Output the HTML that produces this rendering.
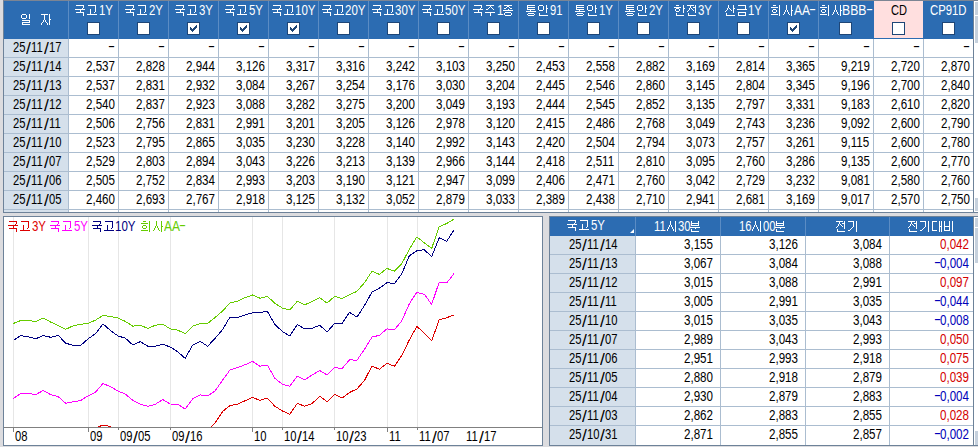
<!DOCTYPE html>
<html><head><meta charset="utf-8"><style>
html,body{margin:0;padding:0}
body{width:978px;height:447px;position:relative;overflow:hidden;background:#dcdcdf;font-family:"Liberation Sans",sans-serif}
body>div,body>span,body>svg{position:absolute;box-sizing:content-box}
.t{white-space:pre;line-height:19px;height:19px;display:block;font-size:14px;transform-origin:left}
.k{color:transparent!important}
</style></head><body>
<div style="left:3px;top:0px;width:975px;height:1px;background:#7c8594;"></div>
<div style="left:3px;top:1px;width:1px;height:212px;background:#6d8299;"></div>
<div style="left:3px;top:212px;width:975px;height:1px;background:#6d8299;"></div>
<div style="left:973px;top:1px;width:1px;height:212px;background:#6d8299;"></div>
<div style="left:4px;top:1px;width:969px;height:38px;background:#2c6cb2;"></div>
<div style="left:874px;top:1px;width:49px;height:37px;background:#ffdfdf;"></div>
<div style="left:68px;top:1px;width:1px;height:38px;background:#5b8cc4;"></div>
<div style="left:118px;top:1px;width:1px;height:38px;background:#5b8cc4;"></div>
<div style="left:168px;top:1px;width:1px;height:38px;background:#5b8cc4;"></div>
<div style="left:218px;top:1px;width:1px;height:38px;background:#5b8cc4;"></div>
<div style="left:268px;top:1px;width:1px;height:38px;background:#5b8cc4;"></div>
<div style="left:318px;top:1px;width:1px;height:38px;background:#5b8cc4;"></div>
<div style="left:368px;top:1px;width:1px;height:38px;background:#5b8cc4;"></div>
<div style="left:418px;top:1px;width:1px;height:38px;background:#5b8cc4;"></div>
<div style="left:468px;top:1px;width:1px;height:38px;background:#5b8cc4;"></div>
<div style="left:518px;top:1px;width:1px;height:38px;background:#5b8cc4;"></div>
<div style="left:568px;top:1px;width:1px;height:38px;background:#5b8cc4;"></div>
<div style="left:618px;top:1px;width:1px;height:38px;background:#5b8cc4;"></div>
<div style="left:668px;top:1px;width:1px;height:38px;background:#5b8cc4;"></div>
<div style="left:718px;top:1px;width:1px;height:38px;background:#5b8cc4;"></div>
<div style="left:768px;top:1px;width:1px;height:38px;background:#5b8cc4;"></div>
<div style="left:818px;top:1px;width:1px;height:38px;background:#5b8cc4;"></div>
<div style="left:4px;top:39px;width:969px;height:173px;background:#fff;"></div>
<div style="left:4px;top:39px;width:64px;height:173px;background:#d5e0eb;"></div>
<div style="left:4px;top:57px;width:969px;height:1px;background:#abbdd0;"></div>
<div style="left:4px;top:76px;width:969px;height:1px;background:#abbdd0;"></div>
<div style="left:4px;top:95px;width:969px;height:1px;background:#abbdd0;"></div>
<div style="left:4px;top:114px;width:969px;height:1px;background:#abbdd0;"></div>
<div style="left:4px;top:133px;width:969px;height:1px;background:#abbdd0;"></div>
<div style="left:4px;top:152px;width:969px;height:1px;background:#abbdd0;"></div>
<div style="left:4px;top:171px;width:969px;height:1px;background:#abbdd0;"></div>
<div style="left:4px;top:190px;width:969px;height:1px;background:#abbdd0;"></div>
<div style="left:4px;top:209px;width:969px;height:1px;background:#abbdd0;"></div>
<div style="left:68px;top:39px;width:1px;height:173px;background:#abbdd0;"></div>
<div style="left:118px;top:39px;width:1px;height:173px;background:#abbdd0;"></div>
<div style="left:168px;top:39px;width:1px;height:173px;background:#abbdd0;"></div>
<div style="left:218px;top:39px;width:1px;height:173px;background:#abbdd0;"></div>
<div style="left:268px;top:39px;width:1px;height:173px;background:#abbdd0;"></div>
<div style="left:318px;top:39px;width:1px;height:173px;background:#abbdd0;"></div>
<div style="left:368px;top:39px;width:1px;height:173px;background:#abbdd0;"></div>
<div style="left:418px;top:39px;width:1px;height:173px;background:#abbdd0;"></div>
<div style="left:468px;top:39px;width:1px;height:173px;background:#abbdd0;"></div>
<div style="left:518px;top:39px;width:1px;height:173px;background:#abbdd0;"></div>
<div style="left:568px;top:39px;width:1px;height:173px;background:#abbdd0;"></div>
<div style="left:618px;top:39px;width:1px;height:173px;background:#abbdd0;"></div>
<div style="left:668px;top:39px;width:1px;height:173px;background:#abbdd0;"></div>
<div style="left:718px;top:39px;width:1px;height:173px;background:#abbdd0;"></div>
<div style="left:768px;top:39px;width:1px;height:173px;background:#abbdd0;"></div>
<div style="left:818px;top:39px;width:1px;height:173px;background:#abbdd0;"></div>
<div style="left:873px;top:39px;width:1px;height:173px;background:#abbdd0;"></div>
<div style="left:923px;top:39px;width:1px;height:173px;background:#abbdd0;"></div>
<span class="t k" style="left:21px;top:10px">일 자</span>
<span class="t" style="left:98.75px;top:1px;color:#fff;transform:scaleX(0.8176)">1Y</span>
<span class="t k" style="left:75px;top:1px">국고1Y</span>
<div style="left:87px;top:22px;width:11px;height:11px;border:1px solid #1e4677;background:#fff"></div>
<span class="t" style="left:148.75px;top:1px;color:#fff;transform:scaleX(0.8176)">2Y</span>
<span class="t k" style="left:125px;top:1px">국고2Y</span>
<div style="left:137px;top:22px;width:11px;height:11px;border:1px solid #1e4677;background:#fff"></div>
<span class="t" style="left:198.75px;top:1px;color:#fff;transform:scaleX(0.8176)">3Y</span>
<span class="t k" style="left:175px;top:1px">국고3Y</span>
<div style="left:187px;top:22px;width:11px;height:11px;border:1px solid #1e4677;background:#fff"></div>
<svg style="left:187px;top:22px" width="13" height="13" shape-rendering="crispEdges"><path d="M9 3h1v1h-1zM8 4h2v1h-2zM3 5h1v1h-1zM7 5h3v1h-3zM3 6h2v1h-2zM6 6h3v1h-3zM3 7h5v1h-5zM4 8h3v1h-3zM5 9h1v1h-1z" fill="#1e4677"/></svg>
<span class="t" style="left:248.75px;top:1px;color:#fff;transform:scaleX(0.8176)">5Y</span>
<span class="t k" style="left:225px;top:1px">국고5Y</span>
<div style="left:237px;top:22px;width:11px;height:11px;border:1px solid #1e4677;background:#fff"></div>
<svg style="left:237px;top:22px" width="13" height="13" shape-rendering="crispEdges"><path d="M9 3h1v1h-1zM8 4h2v1h-2zM3 5h1v1h-1zM7 5h3v1h-3zM3 6h2v1h-2zM6 6h3v1h-3zM3 7h5v1h-5zM4 8h3v1h-3zM5 9h1v1h-1z" fill="#1e4677"/></svg>
<span class="t" style="left:295.25px;top:1px;color:#fff;transform:scaleX(0.8230)">10Y</span>
<span class="t k" style="left:272px;top:1px">국고10Y</span>
<div style="left:287px;top:22px;width:11px;height:11px;border:1px solid #1e4677;background:#fff"></div>
<svg style="left:287px;top:22px" width="13" height="13" shape-rendering="crispEdges"><path d="M9 3h1v1h-1zM8 4h2v1h-2zM3 5h1v1h-1zM7 5h3v1h-3zM3 6h2v1h-2zM6 6h3v1h-3zM3 7h5v1h-5zM4 8h3v1h-3zM5 9h1v1h-1z" fill="#1e4677"/></svg>
<span class="t" style="left:345.25px;top:1px;color:#fff;transform:scaleX(0.8230)">20Y</span>
<span class="t k" style="left:322px;top:1px">국고20Y</span>
<div style="left:337px;top:22px;width:11px;height:11px;border:1px solid #1e4677;background:#fff"></div>
<span class="t" style="left:395.25px;top:1px;color:#fff;transform:scaleX(0.8230)">30Y</span>
<span class="t k" style="left:372px;top:1px">국고30Y</span>
<div style="left:387px;top:22px;width:11px;height:11px;border:1px solid #1e4677;background:#fff"></div>
<span class="t" style="left:445.25px;top:1px;color:#fff;transform:scaleX(0.8230)">50Y</span>
<span class="t k" style="left:422px;top:1px">국고50Y</span>
<div style="left:437px;top:22px;width:11px;height:11px;border:1px solid #1e4677;background:#fff"></div>
<span class="t" style="left:496.75px;top:1px;color:#fff;transform:scaleX(0.8348)">1</span>
<span class="t k" style="left:473px;top:1px">국주1종</span>
<div style="left:487px;top:22px;width:11px;height:11px;border:1px solid #1e4677;background:#fff"></div>
<span class="t" style="left:549.75px;top:1px;color:#fff;transform:scaleX(0.8027)">91</span>
<span class="t k" style="left:526px;top:1px">통안91</span>
<div style="left:537px;top:22px;width:11px;height:11px;border:1px solid #1e4677;background:#fff"></div>
<span class="t" style="left:598.75px;top:1px;color:#fff;transform:scaleX(0.8176)">1Y</span>
<span class="t k" style="left:575px;top:1px">통안1Y</span>
<div style="left:587px;top:22px;width:11px;height:11px;border:1px solid #1e4677;background:#fff"></div>
<span class="t" style="left:648.75px;top:1px;color:#fff;transform:scaleX(0.8176)">2Y</span>
<span class="t k" style="left:625px;top:1px">통안2Y</span>
<div style="left:637px;top:22px;width:11px;height:11px;border:1px solid #1e4677;background:#fff"></div>
<span class="t" style="left:697.75px;top:1px;color:#fff;transform:scaleX(0.8176)">3Y</span>
<span class="t k" style="left:674px;top:1px">한전3Y</span>
<div style="left:687px;top:22px;width:11px;height:11px;border:1px solid #1e4677;background:#fff"></div>
<span class="t" style="left:747.75px;top:1px;color:#fff;transform:scaleX(0.8176)">1Y</span>
<span class="t k" style="left:724px;top:1px">산금1Y</span>
<div style="left:737px;top:22px;width:11px;height:11px;border:1px solid #1e4677;background:#fff"></div>
<span class="t" style="left:793.75px;top:1px;color:#fff;transform:scaleX(0.8567)">AA</span>
<span class="t" style="left:808.80px;top:0px;color:#fff;transform:scaleX(1.5)">-</span>
<span class="t k" style="left:770px;top:1px">회사AA-</span>
<div style="left:787px;top:22px;width:11px;height:11px;border:1px solid #1e4677;background:#fff"></div>
<svg style="left:787px;top:22px" width="13" height="13" shape-rendering="crispEdges"><path d="M9 3h1v1h-1zM8 4h2v1h-2zM3 5h1v1h-1zM7 5h3v1h-3zM3 6h2v1h-2zM6 6h3v1h-3zM3 7h5v1h-5zM4 8h3v1h-3zM5 9h1v1h-1z" fill="#1e4677"/></svg>
<span class="t" style="left:842.25px;top:1px;color:#fff;transform:scaleX(0.8746)">BBB</span>
<span class="t" style="left:865.80px;top:0px;color:#fff;transform:scaleX(1.5)">-</span>
<span class="t k" style="left:819px;top:1px">회사BBB-</span>
<div style="left:839px;top:22px;width:11px;height:11px;border:1px solid #1e4677;background:#fff"></div>
<span class="t" style="left:890.75px;top:1px;color:#000;transform:scaleX(0.7913)">CD</span>
<div style="left:892px;top:22px;width:11px;height:11px;border:1px solid #1e4677;background:#fff"></div>
<span class="t" style="left:930.25px;top:1px;color:#fff;transform:scaleX(0.8088)">CP91D</span>
<div style="left:942px;top:22px;width:11px;height:11px;border:1px solid #1e4677;background:#fff"></div>
<span class="t" style="left:12.75px;top:38px;color:#000;transform:scaleX(0.8027)">25</span>
<span class="t" style="left:25.60px;top:38px;color:#000;transform:scale(1.25,1.166);transform-origin:0 3.35px">/</span>
<span class="t" style="left:30.75px;top:38px;color:#000;transform:scaleX(0.8027)">11</span>
<span class="t" style="left:43.60px;top:38px;color:#000;transform:scale(1.25,1.166);transform-origin:0 3.35px">/</span>
<span class="t" style="left:48.75px;top:38px;color:#000;transform:scaleX(0.8027)">17</span>
<span class="t" style="left:107.80px;top:37px;color:#000;transform:scaleX(1.5)">-</span>
<span class="t" style="left:157.80px;top:37px;color:#000;transform:scaleX(1.5)">-</span>
<span class="t" style="left:207.80px;top:37px;color:#000;transform:scaleX(1.5)">-</span>
<span class="t" style="left:257.80px;top:37px;color:#000;transform:scaleX(1.5)">-</span>
<span class="t" style="left:307.80px;top:37px;color:#000;transform:scaleX(1.5)">-</span>
<span class="t" style="left:357.80px;top:37px;color:#000;transform:scaleX(1.5)">-</span>
<span class="t" style="left:407.80px;top:37px;color:#000;transform:scaleX(1.5)">-</span>
<span class="t" style="left:457.80px;top:37px;color:#000;transform:scaleX(1.5)">-</span>
<span class="t" style="left:507.80px;top:37px;color:#000;transform:scaleX(1.5)">-</span>
<span class="t" style="left:557.80px;top:37px;color:#000;transform:scaleX(1.5)">-</span>
<span class="t" style="left:607.80px;top:37px;color:#000;transform:scaleX(1.5)">-</span>
<span class="t" style="left:657.80px;top:37px;color:#000;transform:scaleX(1.5)">-</span>
<span class="t" style="left:707.80px;top:37px;color:#000;transform:scaleX(1.5)">-</span>
<span class="t" style="left:757.80px;top:37px;color:#000;transform:scaleX(1.5)">-</span>
<span class="t" style="left:807.80px;top:37px;color:#000;transform:scaleX(1.5)">-</span>
<span class="t" style="left:862.80px;top:37px;color:#000;transform:scaleX(1.5)">-</span>
<span class="t" style="left:912.80px;top:37px;color:#000;transform:scaleX(1.5)">-</span>
<span class="t" style="left:962.80px;top:37px;color:#000;transform:scaleX(1.5)">-</span>
<span class="t" style="left:12.75px;top:57px;color:#000;transform:scaleX(0.8027)">25</span>
<span class="t" style="left:25.60px;top:57px;color:#000;transform:scale(1.25,1.166);transform-origin:0 3.35px">/</span>
<span class="t" style="left:30.75px;top:57px;color:#000;transform:scaleX(0.8027)">11</span>
<span class="t" style="left:43.60px;top:57px;color:#000;transform:scale(1.25,1.166);transform-origin:0 3.35px">/</span>
<span class="t" style="left:48.75px;top:57px;color:#000;transform:scaleX(0.8027)">14</span>
<span class="t" style="left:86.25px;top:57px;color:#000;transform:scaleX(0.8278)">2,537</span>
<span class="t" style="left:136.25px;top:57px;color:#000;transform:scaleX(0.8278)">2,828</span>
<span class="t" style="left:186.25px;top:57px;color:#000;transform:scaleX(0.8278)">2,944</span>
<span class="t" style="left:236.25px;top:57px;color:#000;transform:scaleX(0.8278)">3,126</span>
<span class="t" style="left:286.25px;top:57px;color:#000;transform:scaleX(0.8278)">3,317</span>
<span class="t" style="left:336.25px;top:57px;color:#000;transform:scaleX(0.8278)">3,316</span>
<span class="t" style="left:386.25px;top:57px;color:#000;transform:scaleX(0.8278)">3,242</span>
<span class="t" style="left:436.25px;top:57px;color:#000;transform:scaleX(0.8278)">3,103</span>
<span class="t" style="left:486.25px;top:57px;color:#000;transform:scaleX(0.8278)">3,250</span>
<span class="t" style="left:536.25px;top:57px;color:#000;transform:scaleX(0.8278)">2,453</span>
<span class="t" style="left:586.25px;top:57px;color:#000;transform:scaleX(0.8278)">2,558</span>
<span class="t" style="left:636.25px;top:57px;color:#000;transform:scaleX(0.8278)">2,882</span>
<span class="t" style="left:686.25px;top:57px;color:#000;transform:scaleX(0.8278)">3,169</span>
<span class="t" style="left:736.25px;top:57px;color:#000;transform:scaleX(0.8278)">2,814</span>
<span class="t" style="left:786.25px;top:57px;color:#000;transform:scaleX(0.8278)">3,365</span>
<span class="t" style="left:841.25px;top:57px;color:#000;transform:scaleX(0.8278)">9,219</span>
<span class="t" style="left:891.25px;top:57px;color:#000;transform:scaleX(0.8278)">2,720</span>
<span class="t" style="left:941.25px;top:57px;color:#000;transform:scaleX(0.8278)">2,870</span>
<span class="t" style="left:12.75px;top:76px;color:#000;transform:scaleX(0.8027)">25</span>
<span class="t" style="left:25.60px;top:76px;color:#000;transform:scale(1.25,1.166);transform-origin:0 3.35px">/</span>
<span class="t" style="left:30.75px;top:76px;color:#000;transform:scaleX(0.8027)">11</span>
<span class="t" style="left:43.60px;top:76px;color:#000;transform:scale(1.25,1.166);transform-origin:0 3.35px">/</span>
<span class="t" style="left:48.75px;top:76px;color:#000;transform:scaleX(0.8027)">13</span>
<span class="t" style="left:86.25px;top:76px;color:#000;transform:scaleX(0.8278)">2,537</span>
<span class="t" style="left:136.25px;top:76px;color:#000;transform:scaleX(0.8278)">2,831</span>
<span class="t" style="left:186.25px;top:76px;color:#000;transform:scaleX(0.8278)">2,932</span>
<span class="t" style="left:236.25px;top:76px;color:#000;transform:scaleX(0.8278)">3,084</span>
<span class="t" style="left:286.25px;top:76px;color:#000;transform:scaleX(0.8278)">3,267</span>
<span class="t" style="left:336.25px;top:76px;color:#000;transform:scaleX(0.8278)">3,254</span>
<span class="t" style="left:386.25px;top:76px;color:#000;transform:scaleX(0.8278)">3,176</span>
<span class="t" style="left:436.25px;top:76px;color:#000;transform:scaleX(0.8278)">3,030</span>
<span class="t" style="left:486.25px;top:76px;color:#000;transform:scaleX(0.8278)">3,204</span>
<span class="t" style="left:536.25px;top:76px;color:#000;transform:scaleX(0.8278)">2,445</span>
<span class="t" style="left:586.25px;top:76px;color:#000;transform:scaleX(0.8278)">2,546</span>
<span class="t" style="left:636.25px;top:76px;color:#000;transform:scaleX(0.8278)">2,860</span>
<span class="t" style="left:686.25px;top:76px;color:#000;transform:scaleX(0.8278)">3,145</span>
<span class="t" style="left:736.25px;top:76px;color:#000;transform:scaleX(0.8278)">2,804</span>
<span class="t" style="left:786.25px;top:76px;color:#000;transform:scaleX(0.8278)">3,345</span>
<span class="t" style="left:841.25px;top:76px;color:#000;transform:scaleX(0.8278)">9,196</span>
<span class="t" style="left:891.25px;top:76px;color:#000;transform:scaleX(0.8278)">2,700</span>
<span class="t" style="left:941.25px;top:76px;color:#000;transform:scaleX(0.8278)">2,840</span>
<span class="t" style="left:12.75px;top:95px;color:#000;transform:scaleX(0.8027)">25</span>
<span class="t" style="left:25.60px;top:95px;color:#000;transform:scale(1.25,1.166);transform-origin:0 3.35px">/</span>
<span class="t" style="left:30.75px;top:95px;color:#000;transform:scaleX(0.8027)">11</span>
<span class="t" style="left:43.60px;top:95px;color:#000;transform:scale(1.25,1.166);transform-origin:0 3.35px">/</span>
<span class="t" style="left:48.75px;top:95px;color:#000;transform:scaleX(0.8027)">12</span>
<span class="t" style="left:86.25px;top:95px;color:#000;transform:scaleX(0.8278)">2,540</span>
<span class="t" style="left:136.25px;top:95px;color:#000;transform:scaleX(0.8278)">2,837</span>
<span class="t" style="left:186.25px;top:95px;color:#000;transform:scaleX(0.8278)">2,923</span>
<span class="t" style="left:236.25px;top:95px;color:#000;transform:scaleX(0.8278)">3,088</span>
<span class="t" style="left:286.25px;top:95px;color:#000;transform:scaleX(0.8278)">3,282</span>
<span class="t" style="left:336.25px;top:95px;color:#000;transform:scaleX(0.8278)">3,275</span>
<span class="t" style="left:386.25px;top:95px;color:#000;transform:scaleX(0.8278)">3,200</span>
<span class="t" style="left:436.25px;top:95px;color:#000;transform:scaleX(0.8278)">3,049</span>
<span class="t" style="left:486.25px;top:95px;color:#000;transform:scaleX(0.8278)">3,193</span>
<span class="t" style="left:536.25px;top:95px;color:#000;transform:scaleX(0.8278)">2,444</span>
<span class="t" style="left:586.25px;top:95px;color:#000;transform:scaleX(0.8278)">2,545</span>
<span class="t" style="left:636.25px;top:95px;color:#000;transform:scaleX(0.8278)">2,852</span>
<span class="t" style="left:686.25px;top:95px;color:#000;transform:scaleX(0.8278)">3,135</span>
<span class="t" style="left:736.25px;top:95px;color:#000;transform:scaleX(0.8278)">2,797</span>
<span class="t" style="left:786.25px;top:95px;color:#000;transform:scaleX(0.8278)">3,331</span>
<span class="t" style="left:841.25px;top:95px;color:#000;transform:scaleX(0.8278)">9,183</span>
<span class="t" style="left:891.25px;top:95px;color:#000;transform:scaleX(0.8278)">2,610</span>
<span class="t" style="left:941.25px;top:95px;color:#000;transform:scaleX(0.8278)">2,820</span>
<span class="t" style="left:12.75px;top:114px;color:#000;transform:scaleX(0.8027)">25</span>
<span class="t" style="left:25.60px;top:114px;color:#000;transform:scale(1.25,1.166);transform-origin:0 3.35px">/</span>
<span class="t" style="left:30.75px;top:114px;color:#000;transform:scaleX(0.8027)">11</span>
<span class="t" style="left:43.60px;top:114px;color:#000;transform:scale(1.25,1.166);transform-origin:0 3.35px">/</span>
<span class="t" style="left:48.75px;top:114px;color:#000;transform:scaleX(0.8027)">11</span>
<span class="t" style="left:86.25px;top:114px;color:#000;transform:scaleX(0.8278)">2,506</span>
<span class="t" style="left:136.25px;top:114px;color:#000;transform:scaleX(0.8278)">2,756</span>
<span class="t" style="left:186.25px;top:114px;color:#000;transform:scaleX(0.8278)">2,831</span>
<span class="t" style="left:236.25px;top:114px;color:#000;transform:scaleX(0.8278)">2,991</span>
<span class="t" style="left:286.25px;top:114px;color:#000;transform:scaleX(0.8278)">3,201</span>
<span class="t" style="left:336.25px;top:114px;color:#000;transform:scaleX(0.8278)">3,205</span>
<span class="t" style="left:386.25px;top:114px;color:#000;transform:scaleX(0.8278)">3,126</span>
<span class="t" style="left:436.25px;top:114px;color:#000;transform:scaleX(0.8278)">2,978</span>
<span class="t" style="left:486.25px;top:114px;color:#000;transform:scaleX(0.8278)">3,120</span>
<span class="t" style="left:536.25px;top:114px;color:#000;transform:scaleX(0.8278)">2,415</span>
<span class="t" style="left:586.25px;top:114px;color:#000;transform:scaleX(0.8278)">2,486</span>
<span class="t" style="left:636.25px;top:114px;color:#000;transform:scaleX(0.8278)">2,768</span>
<span class="t" style="left:686.25px;top:114px;color:#000;transform:scaleX(0.8278)">3,049</span>
<span class="t" style="left:736.25px;top:114px;color:#000;transform:scaleX(0.8278)">2,743</span>
<span class="t" style="left:786.25px;top:114px;color:#000;transform:scaleX(0.8278)">3,236</span>
<span class="t" style="left:841.25px;top:114px;color:#000;transform:scaleX(0.8278)">9,092</span>
<span class="t" style="left:891.25px;top:114px;color:#000;transform:scaleX(0.8278)">2,600</span>
<span class="t" style="left:941.25px;top:114px;color:#000;transform:scaleX(0.8278)">2,790</span>
<span class="t" style="left:12.75px;top:133px;color:#000;transform:scaleX(0.8027)">25</span>
<span class="t" style="left:25.60px;top:133px;color:#000;transform:scale(1.25,1.166);transform-origin:0 3.35px">/</span>
<span class="t" style="left:30.75px;top:133px;color:#000;transform:scaleX(0.8027)">11</span>
<span class="t" style="left:43.60px;top:133px;color:#000;transform:scale(1.25,1.166);transform-origin:0 3.35px">/</span>
<span class="t" style="left:48.75px;top:133px;color:#000;transform:scaleX(0.8027)">10</span>
<span class="t" style="left:86.25px;top:133px;color:#000;transform:scaleX(0.8278)">2,523</span>
<span class="t" style="left:136.25px;top:133px;color:#000;transform:scaleX(0.8278)">2,795</span>
<span class="t" style="left:186.25px;top:133px;color:#000;transform:scaleX(0.8278)">2,865</span>
<span class="t" style="left:236.25px;top:133px;color:#000;transform:scaleX(0.8278)">3,035</span>
<span class="t" style="left:286.25px;top:133px;color:#000;transform:scaleX(0.8278)">3,230</span>
<span class="t" style="left:336.25px;top:133px;color:#000;transform:scaleX(0.8278)">3,228</span>
<span class="t" style="left:386.25px;top:133px;color:#000;transform:scaleX(0.8278)">3,140</span>
<span class="t" style="left:436.25px;top:133px;color:#000;transform:scaleX(0.8278)">2,992</span>
<span class="t" style="left:486.25px;top:133px;color:#000;transform:scaleX(0.8278)">3,143</span>
<span class="t" style="left:536.25px;top:133px;color:#000;transform:scaleX(0.8278)">2,420</span>
<span class="t" style="left:586.25px;top:133px;color:#000;transform:scaleX(0.8278)">2,504</span>
<span class="t" style="left:636.25px;top:133px;color:#000;transform:scaleX(0.8278)">2,794</span>
<span class="t" style="left:686.25px;top:133px;color:#000;transform:scaleX(0.8278)">3,073</span>
<span class="t" style="left:736.25px;top:133px;color:#000;transform:scaleX(0.8278)">2,757</span>
<span class="t" style="left:786.25px;top:133px;color:#000;transform:scaleX(0.8278)">3,261</span>
<span class="t" style="left:841.25px;top:133px;color:#000;transform:scaleX(0.8278)">9,115</span>
<span class="t" style="left:891.25px;top:133px;color:#000;transform:scaleX(0.8278)">2,600</span>
<span class="t" style="left:941.25px;top:133px;color:#000;transform:scaleX(0.8278)">2,780</span>
<span class="t" style="left:12.75px;top:152px;color:#000;transform:scaleX(0.8027)">25</span>
<span class="t" style="left:25.60px;top:152px;color:#000;transform:scale(1.25,1.166);transform-origin:0 3.35px">/</span>
<span class="t" style="left:30.75px;top:152px;color:#000;transform:scaleX(0.8027)">11</span>
<span class="t" style="left:43.60px;top:152px;color:#000;transform:scale(1.25,1.166);transform-origin:0 3.35px">/</span>
<span class="t" style="left:48.75px;top:152px;color:#000;transform:scaleX(0.8027)">07</span>
<span class="t" style="left:86.25px;top:152px;color:#000;transform:scaleX(0.8278)">2,529</span>
<span class="t" style="left:136.25px;top:152px;color:#000;transform:scaleX(0.8278)">2,803</span>
<span class="t" style="left:186.25px;top:152px;color:#000;transform:scaleX(0.8278)">2,894</span>
<span class="t" style="left:236.25px;top:152px;color:#000;transform:scaleX(0.8278)">3,043</span>
<span class="t" style="left:286.25px;top:152px;color:#000;transform:scaleX(0.8278)">3,226</span>
<span class="t" style="left:336.25px;top:152px;color:#000;transform:scaleX(0.8278)">3,213</span>
<span class="t" style="left:386.25px;top:152px;color:#000;transform:scaleX(0.8278)">3,139</span>
<span class="t" style="left:436.25px;top:152px;color:#000;transform:scaleX(0.8278)">2,966</span>
<span class="t" style="left:486.25px;top:152px;color:#000;transform:scaleX(0.8278)">3,144</span>
<span class="t" style="left:536.25px;top:152px;color:#000;transform:scaleX(0.8278)">2,418</span>
<span class="t" style="left:586.25px;top:152px;color:#000;transform:scaleX(0.8278)">2,511</span>
<span class="t" style="left:636.25px;top:152px;color:#000;transform:scaleX(0.8278)">2,810</span>
<span class="t" style="left:686.25px;top:152px;color:#000;transform:scaleX(0.8278)">3,095</span>
<span class="t" style="left:736.25px;top:152px;color:#000;transform:scaleX(0.8278)">2,760</span>
<span class="t" style="left:786.25px;top:152px;color:#000;transform:scaleX(0.8278)">3,286</span>
<span class="t" style="left:841.25px;top:152px;color:#000;transform:scaleX(0.8278)">9,135</span>
<span class="t" style="left:891.25px;top:152px;color:#000;transform:scaleX(0.8278)">2,600</span>
<span class="t" style="left:941.25px;top:152px;color:#000;transform:scaleX(0.8278)">2,770</span>
<span class="t" style="left:12.75px;top:171px;color:#000;transform:scaleX(0.8027)">25</span>
<span class="t" style="left:25.60px;top:171px;color:#000;transform:scale(1.25,1.166);transform-origin:0 3.35px">/</span>
<span class="t" style="left:30.75px;top:171px;color:#000;transform:scaleX(0.8027)">11</span>
<span class="t" style="left:43.60px;top:171px;color:#000;transform:scale(1.25,1.166);transform-origin:0 3.35px">/</span>
<span class="t" style="left:48.75px;top:171px;color:#000;transform:scaleX(0.8027)">06</span>
<span class="t" style="left:86.25px;top:171px;color:#000;transform:scaleX(0.8278)">2,505</span>
<span class="t" style="left:136.25px;top:171px;color:#000;transform:scaleX(0.8278)">2,752</span>
<span class="t" style="left:186.25px;top:171px;color:#000;transform:scaleX(0.8278)">2,834</span>
<span class="t" style="left:236.25px;top:171px;color:#000;transform:scaleX(0.8278)">2,993</span>
<span class="t" style="left:286.25px;top:171px;color:#000;transform:scaleX(0.8278)">3,203</span>
<span class="t" style="left:336.25px;top:171px;color:#000;transform:scaleX(0.8278)">3,190</span>
<span class="t" style="left:386.25px;top:171px;color:#000;transform:scaleX(0.8278)">3,121</span>
<span class="t" style="left:436.25px;top:171px;color:#000;transform:scaleX(0.8278)">2,947</span>
<span class="t" style="left:486.25px;top:171px;color:#000;transform:scaleX(0.8278)">3,099</span>
<span class="t" style="left:536.25px;top:171px;color:#000;transform:scaleX(0.8278)">2,406</span>
<span class="t" style="left:586.25px;top:171px;color:#000;transform:scaleX(0.8278)">2,471</span>
<span class="t" style="left:636.25px;top:171px;color:#000;transform:scaleX(0.8278)">2,760</span>
<span class="t" style="left:686.25px;top:171px;color:#000;transform:scaleX(0.8278)">3,042</span>
<span class="t" style="left:736.25px;top:171px;color:#000;transform:scaleX(0.8278)">2,729</span>
<span class="t" style="left:786.25px;top:171px;color:#000;transform:scaleX(0.8278)">3,232</span>
<span class="t" style="left:841.25px;top:171px;color:#000;transform:scaleX(0.8278)">9,081</span>
<span class="t" style="left:891.25px;top:171px;color:#000;transform:scaleX(0.8278)">2,580</span>
<span class="t" style="left:941.25px;top:171px;color:#000;transform:scaleX(0.8278)">2,760</span>
<span class="t" style="left:12.75px;top:190px;color:#000;transform:scaleX(0.8027)">25</span>
<span class="t" style="left:25.60px;top:190px;color:#000;transform:scale(1.25,1.166);transform-origin:0 3.35px">/</span>
<span class="t" style="left:30.75px;top:190px;color:#000;transform:scaleX(0.8027)">11</span>
<span class="t" style="left:43.60px;top:190px;color:#000;transform:scale(1.25,1.166);transform-origin:0 3.35px">/</span>
<span class="t" style="left:48.75px;top:190px;color:#000;transform:scaleX(0.8027)">05</span>
<span class="t" style="left:86.25px;top:190px;color:#000;transform:scaleX(0.8278)">2,460</span>
<span class="t" style="left:136.25px;top:190px;color:#000;transform:scaleX(0.8278)">2,693</span>
<span class="t" style="left:186.25px;top:190px;color:#000;transform:scaleX(0.8278)">2,767</span>
<span class="t" style="left:236.25px;top:190px;color:#000;transform:scaleX(0.8278)">2,918</span>
<span class="t" style="left:286.25px;top:190px;color:#000;transform:scaleX(0.8278)">3,125</span>
<span class="t" style="left:336.25px;top:190px;color:#000;transform:scaleX(0.8278)">3,132</span>
<span class="t" style="left:386.25px;top:190px;color:#000;transform:scaleX(0.8278)">3,052</span>
<span class="t" style="left:436.25px;top:190px;color:#000;transform:scaleX(0.8278)">2,879</span>
<span class="t" style="left:486.25px;top:190px;color:#000;transform:scaleX(0.8278)">3,033</span>
<span class="t" style="left:536.25px;top:190px;color:#000;transform:scaleX(0.8278)">2,389</span>
<span class="t" style="left:586.25px;top:190px;color:#000;transform:scaleX(0.8278)">2,438</span>
<span class="t" style="left:636.25px;top:190px;color:#000;transform:scaleX(0.8278)">2,710</span>
<span class="t" style="left:686.25px;top:190px;color:#000;transform:scaleX(0.8278)">2,941</span>
<span class="t" style="left:736.25px;top:190px;color:#000;transform:scaleX(0.8278)">2,681</span>
<span class="t" style="left:786.25px;top:190px;color:#000;transform:scaleX(0.8278)">3,169</span>
<span class="t" style="left:841.25px;top:190px;color:#000;transform:scaleX(0.8278)">9,017</span>
<span class="t" style="left:891.25px;top:190px;color:#000;transform:scaleX(0.8278)">2,570</span>
<span class="t" style="left:941.25px;top:190px;color:#000;transform:scaleX(0.8278)">2,750</span>
<div style="left:974px;top:1px;width:4px;height:211px;background:#ffffff;"></div>
<div style="left:975px;top:2px;width:3px;height:13px;background:#c6d1dd;"></div>
<div style="left:975px;top:16px;width:3px;height:27px;background:#c6d1dd;"></div>
<div style="left:975px;top:198px;width:3px;height:13px;background:#c6d1dd;"></div>
<div style="left:549px;top:216px;width:429px;height:1px;background:#6d8299;"></div>
<div style="left:549px;top:217px;width:1px;height:229px;background:#6d8299;"></div>
<div style="left:973px;top:217px;width:1px;height:229px;background:#6d8299;"></div>
<div style="left:549px;top:445px;width:429px;height:1px;background:#6d8299;"></div>
<div style="left:550px;top:217px;width:423px;height:19px;background:#2c6cb2;"></div>
<div style="left:635px;top:217px;width:1px;height:19px;background:#5b8cc4;"></div>
<div style="left:720px;top:217px;width:1px;height:19px;background:#5b8cc4;"></div>
<div style="left:805px;top:217px;width:1px;height:19px;background:#5b8cc4;"></div>
<div style="left:889px;top:217px;width:1px;height:19px;background:#5b8cc4;"></div>
<div style="left:550px;top:236px;width:423px;height:209px;background:#fff;"></div>
<div style="left:550px;top:236px;width:85px;height:209px;background:#d5e0eb;"></div>
<div style="left:550px;top:254px;width:423px;height:1px;background:#abbdd0;"></div>
<div style="left:550px;top:273px;width:423px;height:1px;background:#abbdd0;"></div>
<div style="left:550px;top:292px;width:423px;height:1px;background:#abbdd0;"></div>
<div style="left:550px;top:311px;width:423px;height:1px;background:#abbdd0;"></div>
<div style="left:550px;top:330px;width:423px;height:1px;background:#abbdd0;"></div>
<div style="left:550px;top:349px;width:423px;height:1px;background:#abbdd0;"></div>
<div style="left:550px;top:368px;width:423px;height:1px;background:#abbdd0;"></div>
<div style="left:550px;top:387px;width:423px;height:1px;background:#abbdd0;"></div>
<div style="left:550px;top:406px;width:423px;height:1px;background:#abbdd0;"></div>
<div style="left:550px;top:425px;width:423px;height:1px;background:#abbdd0;"></div>
<div style="left:635px;top:236px;width:1px;height:209px;background:#abbdd0;"></div>
<div style="left:720px;top:236px;width:1px;height:209px;background:#abbdd0;"></div>
<div style="left:805px;top:236px;width:1px;height:209px;background:#abbdd0;"></div>
<div style="left:889px;top:236px;width:1px;height:209px;background:#abbdd0;"></div>
<span class="t" style="left:590.75px;top:216px;color:#fff;transform:scaleX(0.8176)">5Y</span>
<span class="t k" style="left:567px;top:216px">국고5Y</span>
<span class="t" style="left:653.75px;top:217px;color:#fff;transform:scaleX(0.8027)">11</span>
<span class="t" style="left:677.75px;top:217px;color:#fff;transform:scaleX(0.8027)">30</span>
<span class="t k" style="left:654px;top:217px">11시30분</span>
<span class="t" style="left:738.75px;top:217px;color:#fff;transform:scaleX(0.8027)">16</span>
<span class="t" style="left:762.75px;top:217px;color:#fff;transform:scaleX(0.8027)">00</span>
<span class="t k" style="left:739px;top:217px">16시00분</span>
<span class="t k" style="left:835px;top:217px">전기</span>
<span class="t k" style="left:907px;top:217px">전기대비</span>
<svg style="left:630px;top:229px" width="4" height="4"><path d="M4 0V4H0z" fill="#fff"/></svg>
<span class="t" style="left:568.75px;top:235px;color:#000;transform:scaleX(0.8027)">25</span>
<span class="t" style="left:581.60px;top:235px;color:#000;transform:scale(1.25,1.166);transform-origin:0 3.35px">/</span>
<span class="t" style="left:586.75px;top:235px;color:#000;transform:scaleX(0.8027)">11</span>
<span class="t" style="left:599.60px;top:235px;color:#000;transform:scale(1.25,1.166);transform-origin:0 3.35px">/</span>
<span class="t" style="left:604.75px;top:235px;color:#000;transform:scaleX(0.8027)">14</span>
<span class="t" style="left:684.25px;top:235px;color:#000;transform:scaleX(0.8278)">3,155</span>
<span class="t" style="left:769.25px;top:235px;color:#000;transform:scaleX(0.8278)">3,126</span>
<span class="t" style="left:853.25px;top:235px;color:#000;transform:scaleX(0.8278)">3,084</span>
<span class="t" style="left:940.25px;top:235px;color:#d40000;transform:scaleX(0.8278)">0,042</span>
<span class="t" style="left:568.75px;top:254px;color:#000;transform:scaleX(0.8027)">25</span>
<span class="t" style="left:581.60px;top:254px;color:#000;transform:scale(1.25,1.166);transform-origin:0 3.35px">/</span>
<span class="t" style="left:586.75px;top:254px;color:#000;transform:scaleX(0.8027)">11</span>
<span class="t" style="left:599.60px;top:254px;color:#000;transform:scale(1.25,1.166);transform-origin:0 3.35px">/</span>
<span class="t" style="left:604.75px;top:254px;color:#000;transform:scaleX(0.8027)">13</span>
<span class="t" style="left:684.25px;top:254px;color:#000;transform:scaleX(0.8278)">3,067</span>
<span class="t" style="left:769.25px;top:254px;color:#000;transform:scaleX(0.8278)">3,084</span>
<span class="t" style="left:853.25px;top:254px;color:#000;transform:scaleX(0.8278)">3,088</span>
<span class="t" style="left:933.80px;top:253px;color:#0000b8;transform:scaleX(1.5)">-</span>
<span class="t" style="left:940.25px;top:254px;color:#0000b8;transform:scaleX(0.8278)">0,004</span>
<span class="t" style="left:568.75px;top:273px;color:#000;transform:scaleX(0.8027)">25</span>
<span class="t" style="left:581.60px;top:273px;color:#000;transform:scale(1.25,1.166);transform-origin:0 3.35px">/</span>
<span class="t" style="left:586.75px;top:273px;color:#000;transform:scaleX(0.8027)">11</span>
<span class="t" style="left:599.60px;top:273px;color:#000;transform:scale(1.25,1.166);transform-origin:0 3.35px">/</span>
<span class="t" style="left:604.75px;top:273px;color:#000;transform:scaleX(0.8027)">12</span>
<span class="t" style="left:684.25px;top:273px;color:#000;transform:scaleX(0.8278)">3,015</span>
<span class="t" style="left:769.25px;top:273px;color:#000;transform:scaleX(0.8278)">3,088</span>
<span class="t" style="left:853.25px;top:273px;color:#000;transform:scaleX(0.8278)">2,991</span>
<span class="t" style="left:940.25px;top:273px;color:#d40000;transform:scaleX(0.8278)">0,097</span>
<span class="t" style="left:568.75px;top:292px;color:#000;transform:scaleX(0.8027)">25</span>
<span class="t" style="left:581.60px;top:292px;color:#000;transform:scale(1.25,1.166);transform-origin:0 3.35px">/</span>
<span class="t" style="left:586.75px;top:292px;color:#000;transform:scaleX(0.8027)">11</span>
<span class="t" style="left:599.60px;top:292px;color:#000;transform:scale(1.25,1.166);transform-origin:0 3.35px">/</span>
<span class="t" style="left:604.75px;top:292px;color:#000;transform:scaleX(0.8027)">11</span>
<span class="t" style="left:684.25px;top:292px;color:#000;transform:scaleX(0.8278)">3,005</span>
<span class="t" style="left:769.25px;top:292px;color:#000;transform:scaleX(0.8278)">2,991</span>
<span class="t" style="left:853.25px;top:292px;color:#000;transform:scaleX(0.8278)">3,035</span>
<span class="t" style="left:933.80px;top:291px;color:#0000b8;transform:scaleX(1.5)">-</span>
<span class="t" style="left:940.25px;top:292px;color:#0000b8;transform:scaleX(0.8278)">0,044</span>
<span class="t" style="left:568.75px;top:311px;color:#000;transform:scaleX(0.8027)">25</span>
<span class="t" style="left:581.60px;top:311px;color:#000;transform:scale(1.25,1.166);transform-origin:0 3.35px">/</span>
<span class="t" style="left:586.75px;top:311px;color:#000;transform:scaleX(0.8027)">11</span>
<span class="t" style="left:599.60px;top:311px;color:#000;transform:scale(1.25,1.166);transform-origin:0 3.35px">/</span>
<span class="t" style="left:604.75px;top:311px;color:#000;transform:scaleX(0.8027)">10</span>
<span class="t" style="left:684.25px;top:311px;color:#000;transform:scaleX(0.8278)">3,015</span>
<span class="t" style="left:769.25px;top:311px;color:#000;transform:scaleX(0.8278)">3,035</span>
<span class="t" style="left:853.25px;top:311px;color:#000;transform:scaleX(0.8278)">3,043</span>
<span class="t" style="left:933.80px;top:310px;color:#0000b8;transform:scaleX(1.5)">-</span>
<span class="t" style="left:940.25px;top:311px;color:#0000b8;transform:scaleX(0.8278)">0,008</span>
<span class="t" style="left:568.75px;top:330px;color:#000;transform:scaleX(0.8027)">25</span>
<span class="t" style="left:581.60px;top:330px;color:#000;transform:scale(1.25,1.166);transform-origin:0 3.35px">/</span>
<span class="t" style="left:586.75px;top:330px;color:#000;transform:scaleX(0.8027)">11</span>
<span class="t" style="left:599.60px;top:330px;color:#000;transform:scale(1.25,1.166);transform-origin:0 3.35px">/</span>
<span class="t" style="left:604.75px;top:330px;color:#000;transform:scaleX(0.8027)">07</span>
<span class="t" style="left:684.25px;top:330px;color:#000;transform:scaleX(0.8278)">2,989</span>
<span class="t" style="left:769.25px;top:330px;color:#000;transform:scaleX(0.8278)">3,043</span>
<span class="t" style="left:853.25px;top:330px;color:#000;transform:scaleX(0.8278)">2,993</span>
<span class="t" style="left:940.25px;top:330px;color:#d40000;transform:scaleX(0.8278)">0,050</span>
<span class="t" style="left:568.75px;top:349px;color:#000;transform:scaleX(0.8027)">25</span>
<span class="t" style="left:581.60px;top:349px;color:#000;transform:scale(1.25,1.166);transform-origin:0 3.35px">/</span>
<span class="t" style="left:586.75px;top:349px;color:#000;transform:scaleX(0.8027)">11</span>
<span class="t" style="left:599.60px;top:349px;color:#000;transform:scale(1.25,1.166);transform-origin:0 3.35px">/</span>
<span class="t" style="left:604.75px;top:349px;color:#000;transform:scaleX(0.8027)">06</span>
<span class="t" style="left:684.25px;top:349px;color:#000;transform:scaleX(0.8278)">2,951</span>
<span class="t" style="left:769.25px;top:349px;color:#000;transform:scaleX(0.8278)">2,993</span>
<span class="t" style="left:853.25px;top:349px;color:#000;transform:scaleX(0.8278)">2,918</span>
<span class="t" style="left:940.25px;top:349px;color:#d40000;transform:scaleX(0.8278)">0,075</span>
<span class="t" style="left:568.75px;top:368px;color:#000;transform:scaleX(0.8027)">25</span>
<span class="t" style="left:581.60px;top:368px;color:#000;transform:scale(1.25,1.166);transform-origin:0 3.35px">/</span>
<span class="t" style="left:586.75px;top:368px;color:#000;transform:scaleX(0.8027)">11</span>
<span class="t" style="left:599.60px;top:368px;color:#000;transform:scale(1.25,1.166);transform-origin:0 3.35px">/</span>
<span class="t" style="left:604.75px;top:368px;color:#000;transform:scaleX(0.8027)">05</span>
<span class="t" style="left:684.25px;top:368px;color:#000;transform:scaleX(0.8278)">2,880</span>
<span class="t" style="left:769.25px;top:368px;color:#000;transform:scaleX(0.8278)">2,918</span>
<span class="t" style="left:853.25px;top:368px;color:#000;transform:scaleX(0.8278)">2,879</span>
<span class="t" style="left:940.25px;top:368px;color:#d40000;transform:scaleX(0.8278)">0,039</span>
<span class="t" style="left:568.75px;top:387px;color:#000;transform:scaleX(0.8027)">25</span>
<span class="t" style="left:581.60px;top:387px;color:#000;transform:scale(1.25,1.166);transform-origin:0 3.35px">/</span>
<span class="t" style="left:586.75px;top:387px;color:#000;transform:scaleX(0.8027)">11</span>
<span class="t" style="left:599.60px;top:387px;color:#000;transform:scale(1.25,1.166);transform-origin:0 3.35px">/</span>
<span class="t" style="left:604.75px;top:387px;color:#000;transform:scaleX(0.8027)">04</span>
<span class="t" style="left:684.25px;top:387px;color:#000;transform:scaleX(0.8278)">2,930</span>
<span class="t" style="left:769.25px;top:387px;color:#000;transform:scaleX(0.8278)">2,879</span>
<span class="t" style="left:853.25px;top:387px;color:#000;transform:scaleX(0.8278)">2,883</span>
<span class="t" style="left:933.80px;top:386px;color:#0000b8;transform:scaleX(1.5)">-</span>
<span class="t" style="left:940.25px;top:387px;color:#0000b8;transform:scaleX(0.8278)">0,004</span>
<span class="t" style="left:568.75px;top:406px;color:#000;transform:scaleX(0.8027)">25</span>
<span class="t" style="left:581.60px;top:406px;color:#000;transform:scale(1.25,1.166);transform-origin:0 3.35px">/</span>
<span class="t" style="left:586.75px;top:406px;color:#000;transform:scaleX(0.8027)">11</span>
<span class="t" style="left:599.60px;top:406px;color:#000;transform:scale(1.25,1.166);transform-origin:0 3.35px">/</span>
<span class="t" style="left:604.75px;top:406px;color:#000;transform:scaleX(0.8027)">03</span>
<span class="t" style="left:684.25px;top:406px;color:#000;transform:scaleX(0.8278)">2,862</span>
<span class="t" style="left:769.25px;top:406px;color:#000;transform:scaleX(0.8278)">2,883</span>
<span class="t" style="left:853.25px;top:406px;color:#000;transform:scaleX(0.8278)">2,855</span>
<span class="t" style="left:940.25px;top:406px;color:#d40000;transform:scaleX(0.8278)">0,028</span>
<span class="t" style="left:568.75px;top:425px;color:#000;transform:scaleX(0.8027)">25</span>
<span class="t" style="left:581.60px;top:425px;color:#000;transform:scale(1.25,1.166);transform-origin:0 3.35px">/</span>
<span class="t" style="left:586.75px;top:425px;color:#000;transform:scaleX(0.8027)">10</span>
<span class="t" style="left:599.60px;top:425px;color:#000;transform:scale(1.25,1.166);transform-origin:0 3.35px">/</span>
<span class="t" style="left:604.75px;top:425px;color:#000;transform:scaleX(0.8027)">31</span>
<span class="t" style="left:684.25px;top:425px;color:#000;transform:scaleX(0.8278)">2,871</span>
<span class="t" style="left:769.25px;top:425px;color:#000;transform:scaleX(0.8278)">2,855</span>
<span class="t" style="left:853.25px;top:425px;color:#000;transform:scaleX(0.8278)">2,857</span>
<span class="t" style="left:933.80px;top:424px;color:#0000b8;transform:scaleX(1.5)">-</span>
<span class="t" style="left:940.25px;top:425px;color:#0000b8;transform:scaleX(0.8278)">0,002</span>
<div style="left:974px;top:217px;width:4px;height:228px;background:#ffffff;"></div>
<div style="left:975px;top:218px;width:3px;height:9px;background:#c6d1dd;"></div>
<div style="left:975px;top:228px;width:3px;height:35px;background:#c6d1dd;"></div>
<div style="left:975px;top:431px;width:3px;height:14px;background:#c6d1dd;"></div>
<div style="left:3px;top:216px;width:540px;height:1px;background:#6d8299;"></div>
<div style="left:3px;top:217px;width:1px;height:229px;background:#6d8299;"></div>
<div style="left:542px;top:217px;width:1px;height:229px;background:#6d8299;"></div>
<div style="left:3px;top:445px;width:540px;height:1px;background:#6d8299;"></div>
<div style="left:4px;top:217px;width:538px;height:228px;background:#fff;"></div>
<svg style="left:0;top:0" width="978" height="447">
<defs><clipPath id="pc"><rect x="4" y="217" width="538" height="210"/></clipPath></defs>
<rect x="13" y="217" width="1" height="210" fill="#e6e6e6"/>
<rect x="13" y="428" width="1" height="4" fill="#808080"/>
<rect x="88" y="217" width="1" height="210" fill="#e6e6e6"/>
<rect x="88" y="428" width="1" height="4" fill="#808080"/>
<rect x="118" y="217" width="1" height="210" fill="#e6e6e6"/>
<rect x="118" y="428" width="1" height="2" fill="#808080"/>
<rect x="170" y="217" width="1" height="210" fill="#e6e6e6"/>
<rect x="170" y="428" width="1" height="2" fill="#808080"/>
<rect x="252" y="217" width="1" height="210" fill="#e6e6e6"/>
<rect x="252" y="428" width="1" height="4" fill="#808080"/>
<rect x="282" y="217" width="1" height="210" fill="#e6e6e6"/>
<rect x="282" y="428" width="1" height="2" fill="#808080"/>
<rect x="334" y="217" width="1" height="210" fill="#e6e6e6"/>
<rect x="334" y="428" width="1" height="2" fill="#808080"/>
<rect x="387" y="217" width="1" height="210" fill="#e6e6e6"/>
<rect x="387" y="428" width="1" height="4" fill="#808080"/>
<rect x="417" y="217" width="1" height="210" fill="#e6e6e6"/>
<rect x="417" y="428" width="1" height="2" fill="#808080"/>
<rect x="4" y="427" width="538" height="1" fill="#808080"/>
<g clip-path="url(#pc)" fill="none" stroke-width="1" shape-rendering="crispEdges">
<polyline points="13.4,440.5 20.9,435.5 28.3,435.5 35.8,436.6 43.3,432.4 50.8,436.8 58.2,438.6 65.7,445.3 73.2,443.8 80.6,442.6 88.1,437.8 95.6,428.0 103.0,425.0 110.5,426.5 118.0,433.0 125.5,436.2 132.9,442.3 140.4,446.3 147.9,448.3 155.3,446.3 162.8,441.6 170.3,446.0 177.7,446.3 185.2,451.0 192.7,440.9 200.2,436.9 207.6,431.0 215.1,423.0 222.6,411.5 230.0,405.5 237.5,404.2 245.0,400.8 252.4,397.4 259.9,400.4 267.4,398.1 274.8,406.2 282.3,410.9 289.8,414.2 297.3,403.5 304.7,406.2 312.2,403.5 319.7,396.1 327.1,401.6 334.6,394.5 342.1,398.1 349.5,392.5 357.0,388.9 364.5,380.4 372.0,365.9 379.4,369.3 386.9,363.3 394.4,366.3 401.8,355.3 409.3,340.0 416.8,326.4 424.2,333.0 431.7,340.7 439.2,319.8 446.7,317.7 454.1,315.0" stroke="#dd0000"/>
<polyline points="13.4,398.5 20.9,393.5 28.3,393.5 35.8,394.6 43.3,390.4 50.8,394.8 58.2,396.6 65.7,403.3 73.2,401.8 80.6,400.6 88.1,395.8 95.6,392.1 103.0,383.4 110.5,386.8 118.0,391.0 125.5,394.2 132.9,400.3 140.4,404.3 147.9,406.3 155.3,404.3 162.8,399.6 170.3,404.0 177.7,404.3 185.2,409.0 192.7,398.9 200.2,394.9 207.6,396.0 215.1,390.9 222.6,380.2 230.0,369.9 237.5,367.5 245.0,364.8 252.4,361.2 259.9,366.2 267.4,365.2 274.8,378.3 282.3,384.3 289.8,386.3 297.3,376.2 304.7,380.0 312.2,374.9 319.7,370.6 327.1,375.0 334.6,367.4 342.1,368.6 349.5,359.8 357.0,360.2 364.5,349.2 372.0,337.1 379.4,335.3 386.9,328.9 394.4,329.8 401.8,320.9 409.3,303.8 416.8,292.4 424.2,294.2 431.7,304.3 439.2,282.1 446.7,283.0 454.1,273.5" stroke="#ff00ff"/>
<polyline points="13.4,340.3 20.9,335.6 28.3,336.9 35.8,338.7 43.3,335.6 50.8,337.3 58.2,335.3 65.7,343.2 73.2,345.4 80.6,345.4 88.1,338.9 95.6,333.6 103.0,323.9 110.5,330.6 118.0,335.9 125.5,338.3 132.9,345.0 140.4,341.6 147.9,346.3 155.3,346.3 162.8,344.3 170.3,347.0 177.7,351.7 185.2,358.4 192.7,345.0 200.2,341.3 207.6,346.3 215.1,338.3 222.6,329.5 230.0,317.0 237.5,317.4 245.0,315.0 252.4,312.8 259.9,312.5 267.4,311.4 274.8,324.2 282.3,331.5 289.8,336.0 297.3,324.6 304.7,328.9 312.2,328.2 319.7,325.2 327.1,332.0 334.6,323.5 342.1,323.4 349.5,312.4 357.0,317.1 364.5,305.4 372.0,292.1 379.4,288.2 386.9,282.7 394.4,283.5 401.8,273.7 409.3,255.9 416.8,250.7 424.2,249.8 431.7,256.4 439.2,237.9 446.7,241.3 454.1,229.9" stroke="#000080"/>
<polyline points="13.4,323.5 20.9,320.4 28.3,320.4 35.8,321.5 43.3,318.1 50.8,322.1 58.2,325.5 65.7,329.3 73.2,325.8 80.6,324.2 88.1,323.5 95.6,320.1 103.0,315.4 110.5,316.5 118.0,318.1 125.5,321.5 132.9,326.2 140.4,325.2 147.9,328.5 155.3,325.2 162.8,324.2 170.3,328.9 177.7,330.2 185.2,333.6 192.7,326.2 200.2,323.5 207.6,323.5 215.1,317.4 222.6,311.0 230.0,302.8 237.5,301.3 245.0,297.7 252.4,295.0 259.9,298.2 267.4,296.3 274.8,303.3 282.3,308.0 289.8,310.0 297.3,301.3 304.7,304.9 312.2,301.3 319.7,297.7 327.1,303.1 334.6,296.3 342.1,298.7 349.5,294.7 357.0,291.3 364.5,282.7 372.0,271.3 379.4,274.4 386.9,268.4 394.4,271.3 401.8,263.7 409.3,249.3 416.8,237.0 424.2,242.7 431.7,248.4 439.2,226.7 446.7,223.5 454.1,219.0" stroke="#66cc00"/>
</g></svg>
<span class="t" style="left:14.75px;top:427px;color:#000;transform:scaleX(0.8027)">08</span>
<span class="t" style="left:89.75px;top:427px;color:#000;transform:scaleX(0.8027)">09</span>
<span class="t" style="left:119.75px;top:427px;color:#000;transform:scaleX(0.8027)">09</span>
<span class="t" style="left:132.60px;top:427px;color:#000;transform:scale(1.25,1.166);transform-origin:0 3.35px">/</span>
<span class="t" style="left:137.75px;top:427px;color:#000;transform:scaleX(0.8027)">05</span>
<span class="t" style="left:171.75px;top:427px;color:#000;transform:scaleX(0.8027)">09</span>
<span class="t" style="left:184.60px;top:427px;color:#000;transform:scale(1.25,1.166);transform-origin:0 3.35px">/</span>
<span class="t" style="left:189.75px;top:427px;color:#000;transform:scaleX(0.8027)">16</span>
<span class="t" style="left:253.75px;top:427px;color:#000;transform:scaleX(0.8027)">10</span>
<span class="t" style="left:283.75px;top:427px;color:#000;transform:scaleX(0.8027)">10</span>
<span class="t" style="left:296.60px;top:427px;color:#000;transform:scale(1.25,1.166);transform-origin:0 3.35px">/</span>
<span class="t" style="left:301.75px;top:427px;color:#000;transform:scaleX(0.8027)">14</span>
<span class="t" style="left:335.75px;top:427px;color:#000;transform:scaleX(0.8027)">10</span>
<span class="t" style="left:348.60px;top:427px;color:#000;transform:scale(1.25,1.166);transform-origin:0 3.35px">/</span>
<span class="t" style="left:353.75px;top:427px;color:#000;transform:scaleX(0.8027)">23</span>
<span class="t" style="left:388.75px;top:427px;color:#000;transform:scaleX(0.8027)">11</span>
<span class="t" style="left:418.75px;top:427px;color:#000;transform:scaleX(0.8027)">11</span>
<span class="t" style="left:431.60px;top:427px;color:#000;transform:scale(1.25,1.166);transform-origin:0 3.35px">/</span>
<span class="t" style="left:436.75px;top:427px;color:#000;transform:scaleX(0.8027)">07</span>
<span class="t" style="left:465.75px;top:427px;color:#000;transform:scaleX(0.8027)">11</span>
<span class="t" style="left:478.60px;top:427px;color:#000;transform:scale(1.25,1.166);transform-origin:0 3.35px">/</span>
<span class="t" style="left:483.75px;top:427px;color:#000;transform:scaleX(0.8027)">17</span>
<span class="t" style="left:31.75px;top:217px;color:#dd0000;transform:scaleX(0.8176)">3Y</span>
<span class="t k" style="left:8px;top:217px">국고3Y</span>
<span class="t" style="left:73.75px;top:217px;color:#ff00ff;transform:scaleX(0.8176)">5Y</span>
<span class="t k" style="left:50px;top:217px">국고5Y</span>
<span class="t" style="left:115.25px;top:217px;color:#000080;transform:scaleX(0.8230)">10Y</span>
<span class="t k" style="left:92px;top:217px">국고10Y</span>
<span class="t" style="left:163.75px;top:217px;color:#66cc00;transform:scaleX(0.8567)">AA</span>
<span class="t" style="left:178.80px;top:216px;color:#66cc00;transform:scaleX(1.5)">-</span>
<span class="t k" style="left:140px;top:217px">회사AA-</span>
<svg style="left:0;top:0" width="978" height="447" shape-rendering="crispEdges"><path fill="#fff" d="M22 14h4v1h-4zM29 14h1v1h-1zM21 15h1v1h-1zM26 15h1v1h-1zM29 15h1v1h-1zM21 16h1v1h-1zM26 16h1v1h-1zM29 16h1v1h-1zM21 17h1v1h-1zM26 17h1v1h-1zM29 17h1v1h-1zM22 18h4v1h-4zM29 18h1v1h-1zM22 20h8v1h-8zM29 21h1v1h-1zM22 22h8v1h-8zM22 23h1v1h-1zM22 24h8v1h-8zM41 14h7v1h-7zM49 14h1v1h-1zM44 15h1v1h-1zM49 15h1v1h-1zM44 16h1v1h-1zM49 16h1v1h-1zM44 17h1v1h-1zM49 17h1v1h-1zM44 18h1v1h-1zM49 18h1v1h-1zM44 19h1v1h-1zM49 19h2v1h-2zM43 20h1v1h-1zM45 20h1v1h-1zM49 20h1v1h-1zM43 21h1v1h-1zM45 21h1v1h-1zM49 21h1v1h-1zM42 22h1v1h-1zM46 22h1v1h-1zM49 22h1v1h-1zM41 23h1v1h-1zM47 23h1v1h-1zM49 23h1v1h-1zM41 24h1v1h-1zM47 24h1v1h-1zM49 24h1v1h-1zM76 5h8v1h-8zM83 6h1v1h-1zM83 7h1v1h-1zM82 8h1v1h-1zM75 9h10v1h-10zM80 10h1v1h-1zM80 11h1v1h-1zM76 12h8v1h-8zM83 13h1v1h-1zM83 14h1v1h-1zM83 15h1v1h-1zM88 5h8v1h-8zM95 6h1v1h-1zM95 7h1v1h-1zM95 8h1v1h-1zM90 9h1v1h-1zM95 9h1v1h-1zM90 10h1v1h-1zM95 10h1v1h-1zM90 11h1v1h-1zM95 11h1v1h-1zM90 12h1v1h-1zM94 12h1v1h-1zM90 13h1v1h-1zM87 14h10v1h-10zM126 5h8v1h-8zM133 6h1v1h-1zM133 7h1v1h-1zM132 8h1v1h-1zM125 9h10v1h-10zM130 10h1v1h-1zM130 11h1v1h-1zM126 12h8v1h-8zM133 13h1v1h-1zM133 14h1v1h-1zM133 15h1v1h-1zM138 5h8v1h-8zM145 6h1v1h-1zM145 7h1v1h-1zM145 8h1v1h-1zM140 9h1v1h-1zM145 9h1v1h-1zM140 10h1v1h-1zM145 10h1v1h-1zM140 11h1v1h-1zM145 11h1v1h-1zM140 12h1v1h-1zM144 12h1v1h-1zM140 13h1v1h-1zM137 14h10v1h-10zM176 5h8v1h-8zM183 6h1v1h-1zM183 7h1v1h-1zM182 8h1v1h-1zM175 9h10v1h-10zM180 10h1v1h-1zM180 11h1v1h-1zM176 12h8v1h-8zM183 13h1v1h-1zM183 14h1v1h-1zM183 15h1v1h-1zM188 5h8v1h-8zM195 6h1v1h-1zM195 7h1v1h-1zM195 8h1v1h-1zM190 9h1v1h-1zM195 9h1v1h-1zM190 10h1v1h-1zM195 10h1v1h-1zM190 11h1v1h-1zM195 11h1v1h-1zM190 12h1v1h-1zM194 12h1v1h-1zM190 13h1v1h-1zM187 14h10v1h-10zM226 5h8v1h-8zM233 6h1v1h-1zM233 7h1v1h-1zM232 8h1v1h-1zM225 9h10v1h-10zM230 10h1v1h-1zM230 11h1v1h-1zM226 12h8v1h-8zM233 13h1v1h-1zM233 14h1v1h-1zM233 15h1v1h-1zM238 5h8v1h-8zM245 6h1v1h-1zM245 7h1v1h-1zM245 8h1v1h-1zM240 9h1v1h-1zM245 9h1v1h-1zM240 10h1v1h-1zM245 10h1v1h-1zM240 11h1v1h-1zM245 11h1v1h-1zM240 12h1v1h-1zM244 12h1v1h-1zM240 13h1v1h-1zM237 14h10v1h-10zM273 5h8v1h-8zM280 6h1v1h-1zM280 7h1v1h-1zM279 8h1v1h-1zM272 9h10v1h-10zM277 10h1v1h-1zM277 11h1v1h-1zM273 12h8v1h-8zM280 13h1v1h-1zM280 14h1v1h-1zM280 15h1v1h-1zM285 5h8v1h-8zM292 6h1v1h-1zM292 7h1v1h-1zM292 8h1v1h-1zM287 9h1v1h-1zM292 9h1v1h-1zM287 10h1v1h-1zM292 10h1v1h-1zM287 11h1v1h-1zM292 11h1v1h-1zM287 12h1v1h-1zM291 12h1v1h-1zM287 13h1v1h-1zM284 14h10v1h-10zM323 5h8v1h-8zM330 6h1v1h-1zM330 7h1v1h-1zM329 8h1v1h-1zM322 9h10v1h-10zM327 10h1v1h-1zM327 11h1v1h-1zM323 12h8v1h-8zM330 13h1v1h-1zM330 14h1v1h-1zM330 15h1v1h-1zM335 5h8v1h-8zM342 6h1v1h-1zM342 7h1v1h-1zM342 8h1v1h-1zM337 9h1v1h-1zM342 9h1v1h-1zM337 10h1v1h-1zM342 10h1v1h-1zM337 11h1v1h-1zM342 11h1v1h-1zM337 12h1v1h-1zM341 12h1v1h-1zM337 13h1v1h-1zM334 14h10v1h-10zM373 5h8v1h-8zM380 6h1v1h-1zM380 7h1v1h-1zM379 8h1v1h-1zM372 9h10v1h-10zM377 10h1v1h-1zM377 11h1v1h-1zM373 12h8v1h-8zM380 13h1v1h-1zM380 14h1v1h-1zM380 15h1v1h-1zM385 5h8v1h-8zM392 6h1v1h-1zM392 7h1v1h-1zM392 8h1v1h-1zM387 9h1v1h-1zM392 9h1v1h-1zM387 10h1v1h-1zM392 10h1v1h-1zM387 11h1v1h-1zM392 11h1v1h-1zM387 12h1v1h-1zM391 12h1v1h-1zM387 13h1v1h-1zM384 14h10v1h-10zM423 5h8v1h-8zM430 6h1v1h-1zM430 7h1v1h-1zM429 8h1v1h-1zM422 9h10v1h-10zM427 10h1v1h-1zM427 11h1v1h-1zM423 12h8v1h-8zM430 13h1v1h-1zM430 14h1v1h-1zM430 15h1v1h-1zM435 5h8v1h-8zM442 6h1v1h-1zM442 7h1v1h-1zM442 8h1v1h-1zM437 9h1v1h-1zM442 9h1v1h-1zM437 10h1v1h-1zM442 10h1v1h-1zM437 11h1v1h-1zM442 11h1v1h-1zM437 12h1v1h-1zM441 12h1v1h-1zM437 13h1v1h-1zM434 14h10v1h-10zM474 5h8v1h-8zM481 6h1v1h-1zM481 7h1v1h-1zM480 8h1v1h-1zM473 9h10v1h-10zM478 10h1v1h-1zM478 11h1v1h-1zM474 12h8v1h-8zM481 13h1v1h-1zM481 14h1v1h-1zM481 15h1v1h-1zM486 5h8v1h-8zM490 6h1v1h-1zM489 7h1v1h-1zM491 7h1v1h-1zM488 8h1v1h-1zM492 8h1v1h-1zM486 9h2v1h-2zM493 9h1v1h-1zM485 12h10v1h-10zM490 13h1v1h-1zM490 14h1v1h-1zM490 15h1v1h-1zM504 5h8v1h-8zM507 6h2v1h-2zM506 7h1v1h-1zM509 7h1v1h-1zM504 8h2v1h-2zM510 8h2v1h-2zM508 9h1v1h-1zM503 10h10v1h-10zM505 12h6v1h-6zM504 13h1v1h-1zM511 13h1v1h-1zM504 14h1v1h-1zM511 14h1v1h-1zM505 15h6v1h-6zM527 5h8v1h-8zM527 6h1v1h-1zM527 7h8v1h-8zM527 8h1v1h-1zM527 9h8v1h-8zM530 10h1v1h-1zM526 11h10v1h-10zM528 13h6v1h-6zM527 14h1v1h-1zM534 14h1v1h-1zM528 15h6v1h-6zM539 5h4v1h-4zM546 5h1v1h-1zM538 6h1v1h-1zM543 6h1v1h-1zM546 6h1v1h-1zM538 7h1v1h-1zM543 7h1v1h-1zM546 7h1v1h-1zM538 8h1v1h-1zM543 8h1v1h-1zM546 8h2v1h-2zM538 9h1v1h-1zM543 9h1v1h-1zM546 9h1v1h-1zM539 10h4v1h-4zM546 10h1v1h-1zM546 11h1v1h-1zM546 12h1v1h-1zM539 13h1v1h-1zM539 14h1v1h-1zM539 15h9v1h-9zM576 5h8v1h-8zM576 6h1v1h-1zM576 7h8v1h-8zM576 8h1v1h-1zM576 9h8v1h-8zM579 10h1v1h-1zM575 11h10v1h-10zM577 13h6v1h-6zM576 14h1v1h-1zM583 14h1v1h-1zM577 15h6v1h-6zM588 5h4v1h-4zM595 5h1v1h-1zM587 6h1v1h-1zM592 6h1v1h-1zM595 6h1v1h-1zM587 7h1v1h-1zM592 7h1v1h-1zM595 7h1v1h-1zM587 8h1v1h-1zM592 8h1v1h-1zM595 8h2v1h-2zM587 9h1v1h-1zM592 9h1v1h-1zM595 9h1v1h-1zM588 10h4v1h-4zM595 10h1v1h-1zM595 11h1v1h-1zM595 12h1v1h-1zM588 13h1v1h-1zM588 14h1v1h-1zM588 15h9v1h-9zM626 5h8v1h-8zM626 6h1v1h-1zM626 7h8v1h-8zM626 8h1v1h-1zM626 9h8v1h-8zM629 10h1v1h-1zM625 11h10v1h-10zM627 13h6v1h-6zM626 14h1v1h-1zM633 14h1v1h-1zM627 15h6v1h-6zM638 5h4v1h-4zM645 5h1v1h-1zM637 6h1v1h-1zM642 6h1v1h-1zM645 6h1v1h-1zM637 7h1v1h-1zM642 7h1v1h-1zM645 7h1v1h-1zM637 8h1v1h-1zM642 8h1v1h-1zM645 8h2v1h-2zM637 9h1v1h-1zM642 9h1v1h-1zM645 9h1v1h-1zM638 10h4v1h-4zM645 10h1v1h-1zM645 11h1v1h-1zM645 12h1v1h-1zM638 13h1v1h-1zM638 14h1v1h-1zM638 15h9v1h-9zM676 5h3v1h-3zM683 5h1v1h-1zM683 6h1v1h-1zM674 7h7v1h-7zM683 7h1v1h-1zM676 8h3v1h-3zM683 8h2v1h-2zM675 9h1v1h-1zM679 9h1v1h-1zM683 9h1v1h-1zM675 10h1v1h-1zM679 10h1v1h-1zM683 10h1v1h-1zM676 11h3v1h-3zM683 11h1v1h-1zM683 12h1v1h-1zM676 13h1v1h-1zM676 14h1v1h-1zM676 15h8v1h-8zM687 5h7v1h-7zM695 5h1v1h-1zM690 6h1v1h-1zM695 6h1v1h-1zM690 7h1v1h-1zM693 7h3v1h-3zM689 8h1v1h-1zM691 8h1v1h-1zM695 8h1v1h-1zM689 9h1v1h-1zM692 9h1v1h-1zM695 9h1v1h-1zM688 10h1v1h-1zM693 10h1v1h-1zM695 10h1v1h-1zM687 11h1v1h-1zM695 11h1v1h-1zM695 12h1v1h-1zM688 13h1v1h-1zM688 14h1v1h-1zM688 15h8v1h-8zM728 5h1v1h-1zM733 5h1v1h-1zM728 6h1v1h-1zM733 6h1v1h-1zM728 7h1v1h-1zM733 7h1v1h-1zM727 8h1v1h-1zM729 8h1v1h-1zM733 8h2v1h-2zM727 9h1v1h-1zM730 9h1v1h-1zM733 9h1v1h-1zM726 10h1v1h-1zM731 10h1v1h-1zM733 10h1v1h-1zM725 11h1v1h-1zM733 11h1v1h-1zM733 12h1v1h-1zM726 13h1v1h-1zM726 14h1v1h-1zM726 15h9v1h-9zM738 5h8v1h-8zM745 6h1v1h-1zM745 7h1v1h-1zM745 8h1v1h-1zM737 9h10v1h-10zM738 12h8v1h-8zM738 13h1v1h-1zM745 13h1v1h-1zM738 14h1v1h-1zM745 14h1v1h-1zM738 15h8v1h-8zM773 5h3v1h-3zM779 5h1v1h-1zM779 6h1v1h-1zM771 7h7v1h-7zM779 7h1v1h-1zM779 8h1v1h-1zM773 9h3v1h-3zM779 9h1v1h-1zM772 10h1v1h-1zM776 10h1v1h-1zM779 10h1v1h-1zM772 11h1v1h-1zM776 11h1v1h-1zM779 11h1v1h-1zM773 12h3v1h-3zM779 12h1v1h-1zM779 13h1v1h-1zM771 14h7v1h-7zM779 14h1v1h-1zM779 15h1v1h-1zM786 5h1v1h-1zM791 5h1v1h-1zM786 6h1v1h-1zM791 6h1v1h-1zM786 7h1v1h-1zM791 7h1v1h-1zM786 8h1v1h-1zM791 8h1v1h-1zM786 9h1v1h-1zM791 9h1v1h-1zM785 10h1v1h-1zM787 10h1v1h-1zM791 10h2v1h-2zM785 11h1v1h-1zM787 11h1v1h-1zM791 11h1v1h-1zM784 12h1v1h-1zM788 12h1v1h-1zM791 12h1v1h-1zM784 13h1v1h-1zM788 13h1v1h-1zM791 13h1v1h-1zM783 14h1v1h-1zM789 14h1v1h-1zM791 14h1v1h-1zM791 15h1v1h-1zM822 5h3v1h-3zM828 5h1v1h-1zM828 6h1v1h-1zM820 7h7v1h-7zM828 7h1v1h-1zM828 8h1v1h-1zM822 9h3v1h-3zM828 9h1v1h-1zM821 10h1v1h-1zM825 10h1v1h-1zM828 10h1v1h-1zM821 11h1v1h-1zM825 11h1v1h-1zM828 11h1v1h-1zM822 12h3v1h-3zM828 12h1v1h-1zM828 13h1v1h-1zM820 14h7v1h-7zM828 14h1v1h-1zM828 15h1v1h-1zM835 5h1v1h-1zM840 5h1v1h-1zM835 6h1v1h-1zM840 6h1v1h-1zM835 7h1v1h-1zM840 7h1v1h-1zM835 8h1v1h-1zM840 8h1v1h-1zM835 9h1v1h-1zM840 9h1v1h-1zM834 10h1v1h-1zM836 10h1v1h-1zM840 10h2v1h-2zM834 11h1v1h-1zM836 11h1v1h-1zM840 11h1v1h-1zM833 12h1v1h-1zM837 12h1v1h-1zM840 12h1v1h-1zM833 13h1v1h-1zM837 13h1v1h-1zM840 13h1v1h-1zM832 14h1v1h-1zM838 14h1v1h-1zM840 14h1v1h-1zM840 15h1v1h-1zM568 220h8v1h-8zM575 221h1v1h-1zM575 222h1v1h-1zM574 223h1v1h-1zM567 224h10v1h-10zM572 225h1v1h-1zM572 226h1v1h-1zM568 227h8v1h-8zM575 228h1v1h-1zM575 229h1v1h-1zM575 230h1v1h-1zM580 220h8v1h-8zM587 221h1v1h-1zM587 222h1v1h-1zM587 223h1v1h-1zM582 224h1v1h-1zM587 224h1v1h-1zM582 225h1v1h-1zM587 225h1v1h-1zM582 226h1v1h-1zM587 226h1v1h-1zM582 227h1v1h-1zM586 227h1v1h-1zM582 228h1v1h-1zM579 229h10v1h-10zM670 221h1v1h-1zM675 221h1v1h-1zM670 222h1v1h-1zM675 222h1v1h-1zM670 223h1v1h-1zM675 223h1v1h-1zM670 224h1v1h-1zM675 224h1v1h-1zM669 225h1v1h-1zM671 225h1v1h-1zM675 225h1v1h-1zM669 226h1v1h-1zM671 226h1v1h-1zM675 226h1v1h-1zM668 227h1v1h-1zM672 227h1v1h-1zM675 227h1v1h-1zM668 228h1v1h-1zM672 228h1v1h-1zM675 228h1v1h-1zM667 229h1v1h-1zM673 229h1v1h-1zM675 229h1v1h-1zM667 230h1v1h-1zM673 230h1v1h-1zM675 230h1v1h-1zM675 231h1v1h-1zM691 221h1v1h-1zM698 221h1v1h-1zM691 222h1v1h-1zM698 222h1v1h-1zM691 223h8v1h-8zM691 224h1v1h-1zM698 224h1v1h-1zM691 225h8v1h-8zM690 227h10v1h-10zM695 228h1v1h-1zM691 229h1v1h-1zM691 230h1v1h-1zM691 231h8v1h-8zM755 221h1v1h-1zM760 221h1v1h-1zM755 222h1v1h-1zM760 222h1v1h-1zM755 223h1v1h-1zM760 223h1v1h-1zM755 224h1v1h-1zM760 224h1v1h-1zM754 225h1v1h-1zM756 225h1v1h-1zM760 225h1v1h-1zM754 226h1v1h-1zM756 226h1v1h-1zM760 226h1v1h-1zM753 227h1v1h-1zM757 227h1v1h-1zM760 227h1v1h-1zM753 228h1v1h-1zM757 228h1v1h-1zM760 228h1v1h-1zM752 229h1v1h-1zM758 229h1v1h-1zM760 229h1v1h-1zM752 230h1v1h-1zM758 230h1v1h-1zM760 230h1v1h-1zM760 231h1v1h-1zM776 221h1v1h-1zM783 221h1v1h-1zM776 222h1v1h-1zM783 222h1v1h-1zM776 223h8v1h-8zM776 224h1v1h-1zM783 224h1v1h-1zM776 225h8v1h-8zM775 227h10v1h-10zM780 228h1v1h-1zM776 229h1v1h-1zM776 230h1v1h-1zM776 231h8v1h-8zM836 221h7v1h-7zM844 221h1v1h-1zM839 222h1v1h-1zM844 222h1v1h-1zM839 223h1v1h-1zM842 223h3v1h-3zM838 224h1v1h-1zM840 224h1v1h-1zM844 224h1v1h-1zM838 225h1v1h-1zM841 225h1v1h-1zM844 225h1v1h-1zM837 226h1v1h-1zM842 226h1v1h-1zM844 226h1v1h-1zM836 227h1v1h-1zM844 227h1v1h-1zM844 228h1v1h-1zM837 229h1v1h-1zM837 230h1v1h-1zM837 231h8v1h-8zM848 221h6v1h-6zM856 221h1v1h-1zM853 222h1v1h-1zM856 222h1v1h-1zM853 223h1v1h-1zM856 223h1v1h-1zM853 224h1v1h-1zM856 224h1v1h-1zM853 225h1v1h-1zM856 225h1v1h-1zM853 226h1v1h-1zM856 226h1v1h-1zM852 227h1v1h-1zM856 227h1v1h-1zM851 228h1v1h-1zM856 228h1v1h-1zM850 229h1v1h-1zM856 229h1v1h-1zM848 230h2v1h-2zM856 230h1v1h-1zM856 231h1v1h-1zM908 221h7v1h-7zM916 221h1v1h-1zM911 222h1v1h-1zM916 222h1v1h-1zM911 223h1v1h-1zM914 223h3v1h-3zM910 224h1v1h-1zM912 224h1v1h-1zM916 224h1v1h-1zM910 225h1v1h-1zM913 225h1v1h-1zM916 225h1v1h-1zM909 226h1v1h-1zM914 226h1v1h-1zM916 226h1v1h-1zM908 227h1v1h-1zM916 227h1v1h-1zM916 228h1v1h-1zM909 229h1v1h-1zM909 230h1v1h-1zM909 231h8v1h-8zM920 221h6v1h-6zM928 221h1v1h-1zM925 222h1v1h-1zM928 222h1v1h-1zM925 223h1v1h-1zM928 223h1v1h-1zM925 224h1v1h-1zM928 224h1v1h-1zM925 225h1v1h-1zM928 225h1v1h-1zM925 226h1v1h-1zM928 226h1v1h-1zM924 227h1v1h-1zM928 227h1v1h-1zM923 228h1v1h-1zM928 228h1v1h-1zM922 229h1v1h-1zM928 229h1v1h-1zM920 230h2v1h-2zM928 230h1v1h-1zM928 231h1v1h-1zM932 221h5v1h-5zM939 221h1v1h-1zM941 221h1v1h-1zM932 222h1v1h-1zM939 222h1v1h-1zM941 222h1v1h-1zM932 223h1v1h-1zM939 223h1v1h-1zM941 223h1v1h-1zM932 224h1v1h-1zM939 224h1v1h-1zM941 224h1v1h-1zM932 225h1v1h-1zM939 225h1v1h-1zM941 225h1v1h-1zM932 226h1v1h-1zM939 226h3v1h-3zM932 227h1v1h-1zM939 227h1v1h-1zM941 227h1v1h-1zM932 228h1v1h-1zM939 228h1v1h-1zM941 228h1v1h-1zM932 229h1v1h-1zM939 229h1v1h-1zM941 229h1v1h-1zM932 230h5v1h-5zM939 230h1v1h-1zM941 230h1v1h-1zM939 231h1v1h-1zM941 231h1v1h-1zM944 221h1v1h-1zM949 221h1v1h-1zM952 221h1v1h-1zM944 222h1v1h-1zM949 222h1v1h-1zM952 222h1v1h-1zM944 223h1v1h-1zM949 223h1v1h-1zM952 223h1v1h-1zM944 224h1v1h-1zM949 224h1v1h-1zM952 224h1v1h-1zM944 225h1v1h-1zM949 225h1v1h-1zM952 225h1v1h-1zM944 226h6v1h-6zM952 226h1v1h-1zM944 227h1v1h-1zM949 227h1v1h-1zM952 227h1v1h-1zM944 228h1v1h-1zM949 228h1v1h-1zM952 228h1v1h-1zM944 229h1v1h-1zM949 229h1v1h-1zM952 229h1v1h-1zM944 230h6v1h-6zM952 230h1v1h-1zM952 231h1v1h-1z"/><path fill="#dd0000" d="M9 221h8v1h-8zM16 222h1v1h-1zM16 223h1v1h-1zM15 224h1v1h-1zM8 225h10v1h-10zM13 226h1v1h-1zM13 227h1v1h-1zM9 228h8v1h-8zM16 229h1v1h-1zM16 230h1v1h-1zM16 231h1v1h-1zM21 221h8v1h-8zM28 222h1v1h-1zM28 223h1v1h-1zM28 224h1v1h-1zM23 225h1v1h-1zM28 225h1v1h-1zM23 226h1v1h-1zM28 226h1v1h-1zM23 227h1v1h-1zM28 227h1v1h-1zM23 228h1v1h-1zM27 228h1v1h-1zM23 229h1v1h-1zM20 230h10v1h-10z"/><path fill="#ff00ff" d="M51 221h8v1h-8zM58 222h1v1h-1zM58 223h1v1h-1zM57 224h1v1h-1zM50 225h10v1h-10zM55 226h1v1h-1zM55 227h1v1h-1zM51 228h8v1h-8zM58 229h1v1h-1zM58 230h1v1h-1zM58 231h1v1h-1zM63 221h8v1h-8zM70 222h1v1h-1zM70 223h1v1h-1zM70 224h1v1h-1zM65 225h1v1h-1zM70 225h1v1h-1zM65 226h1v1h-1zM70 226h1v1h-1zM65 227h1v1h-1zM70 227h1v1h-1zM65 228h1v1h-1zM69 228h1v1h-1zM65 229h1v1h-1zM62 230h10v1h-10z"/><path fill="#000080" d="M93 221h8v1h-8zM100 222h1v1h-1zM100 223h1v1h-1zM99 224h1v1h-1zM92 225h10v1h-10zM97 226h1v1h-1zM97 227h1v1h-1zM93 228h8v1h-8zM100 229h1v1h-1zM100 230h1v1h-1zM100 231h1v1h-1zM105 221h8v1h-8zM112 222h1v1h-1zM112 223h1v1h-1zM112 224h1v1h-1zM107 225h1v1h-1zM112 225h1v1h-1zM107 226h1v1h-1zM112 226h1v1h-1zM107 227h1v1h-1zM112 227h1v1h-1zM107 228h1v1h-1zM111 228h1v1h-1zM107 229h1v1h-1zM104 230h10v1h-10z"/><path fill="#66cc00" d="M143 221h3v1h-3zM149 221h1v1h-1zM149 222h1v1h-1zM141 223h7v1h-7zM149 223h1v1h-1zM149 224h1v1h-1zM143 225h3v1h-3zM149 225h1v1h-1zM142 226h1v1h-1zM146 226h1v1h-1zM149 226h1v1h-1zM142 227h1v1h-1zM146 227h1v1h-1zM149 227h1v1h-1zM143 228h3v1h-3zM149 228h1v1h-1zM149 229h1v1h-1zM141 230h7v1h-7zM149 230h1v1h-1zM149 231h1v1h-1zM156 221h1v1h-1zM161 221h1v1h-1zM156 222h1v1h-1zM161 222h1v1h-1zM156 223h1v1h-1zM161 223h1v1h-1zM156 224h1v1h-1zM161 224h1v1h-1zM156 225h1v1h-1zM161 225h1v1h-1zM155 226h1v1h-1zM157 226h1v1h-1zM161 226h2v1h-2zM155 227h1v1h-1zM157 227h1v1h-1zM161 227h1v1h-1zM154 228h1v1h-1zM158 228h1v1h-1zM161 228h1v1h-1zM154 229h1v1h-1zM158 229h1v1h-1zM161 229h1v1h-1zM153 230h1v1h-1zM159 230h1v1h-1zM161 230h1v1h-1zM161 231h1v1h-1z"/></svg>
</body></html>
